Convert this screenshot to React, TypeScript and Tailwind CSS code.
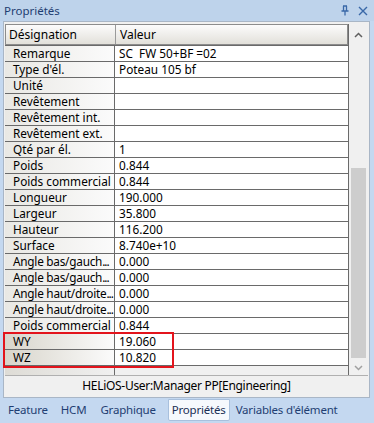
import React from "react";

const rows: [string, string][] = [
  ["Remarque", "SC  FW 50+BF =02"],
  ["Type d'él.", "Poteau 105 bf"],
  ["Unité", ""],
  ["Revêtement", ""],
  ["Revêtement int.", ""],
  ["Revêtement ext.", ""],
  ["Qté par él.", "1"],
  ["Poids", "0.844"],
  ["Poids commercial", "0.844"],
  ["Longueur", "190.000"],
  ["Largeur", "35.800"],
  ["Hauteur", "116.200"],
  ["Surface", "8.740e+10"],
  ["Angle bas/gauch...", "0.000"],
  ["Angle bas/gauch...", "0.000"],
  ["Angle haut/droite...", "0.000"],
  ["Angle haut/droite...", "0.000"],
  ["Poids commercial", "0.844"],
  ["WY", "19.060"],
  ["WZ", "10.820"],
];

const font = { fontFamily: '"Noto Sans", "Open Sans", sans-serif' };

function Label({ text }: { text: string }) {
  if (text.endsWith("...")) {
    const base = text.slice(0, -3);
    return (
      <span className="tracking-[-0.25px]">
        {base}
        <span className="tracking-[-1px]">...</span>
      </span>
    );
  }
  return <span>{text}</span>;
}

export default function App() {
  return (
    <div
      className="relative w-[374px] h-[423px] bg-[#c4d8f0] text-[11.8px] text-black overflow-hidden"
      style={font}
    >
      {/* Title bar */}
      <div className="h-[21px] flex items-center justify-between pl-[4px] pr-[6px] bg-[#bed3eb]">
        <span className="text-[#1f3e72] text-[11.5px]">Propriétés</span>
        <div className="flex items-center gap-[6px]">
          <svg width="10" height="11" viewBox="0 0 10 11" className="mr-[2px]">
            <path d="M3 1h4M3.5 1v5M6.5 1v5M1.5 6h7M5 6v4.5" stroke="#3a68a8" strokeWidth="1.3" fill="none" />
          </svg>
          <svg width="10" height="10" viewBox="0 0 10 10">
            <path d="M1 1L9 9M9 1L1 9" stroke="#3a68a8" strokeWidth="1.4" />
          </svg>
        </div>
      </div>

      {/* Frame */}
      <div className="ml-[3px] w-[367px] h-[377px] border border-[#a9b6c6] bg-[#f0f0f0] flex flex-col">
        <div className="flex flex-1 pt-[2px] pl-[1px]">
          {/* Grid */}
          <div className="w-[344px] flex flex-col border-r border-[#6a6a6a] bg-white">
            {/* Header */}
            <div className="h-[21px] flex border border-[#8c8c8c] bg-gradient-to-b from-[#fcfcfc] to-[#e2e0da] text-[12px]">
              <div className="w-[110px] border-r border-[#9a9a9a] pl-[3px] flex items-center">
                Désignation
              </div>
              <div className="flex-1 pl-[4px] flex items-center">Valeur</div>
            </div>
            {/* Rows */}
            <div className="flex flex-col bg-[#f0f0f0] flex-1">
              {rows.map(([k, v], i) => {
                const sel = i >= 18;
                return (
                  <div key={i} className="h-[16px] flex border-t border-[#6a6a6a] bg-white">
                    <div
                      className={
                        "w-[110px] shrink-0 border-r border-[#6a6a6a] pl-[8px] flex items-center whitespace-nowrap overflow-hidden " +
                        (sel
                          ? "bg-gradient-to-r from-[#d8d5cb] to-[#fbfbfb]"
                          : "bg-gradient-to-r from-[#e9e8e4] to-[#fbfbfb]")
                      }
                    >
                      <Label text={k} />
                    </div>
                    <div className="flex-1 pl-[4px] flex items-center whitespace-pre">{v}</div>
                  </div>
                );
              })}
              <div className="flex flex-1 border-t border-[#6a6a6a]">
                <div className="w-[110px] border-r border-[#6a6a6a] bg-gradient-to-r from-[#dedcd6] to-[#f0f0f0]" />
                <div className="flex-1" />
              </div>
            </div>
          </div>
          {/* Scrollbar */}
          <div className="w-[17px] ml-[1px] flex flex-col bg-[#f0f0f0]">
            <div className="h-[17px] flex items-center justify-center mt-[2px]">
              <svg width="9" height="6" viewBox="0 0 9 6">
                <path d="M1 5L4.5 1.5L8 5" stroke="#606060" strokeWidth="1.5" fill="none" />
              </svg>
            </div>
            <div className="flex-1 flex flex-col">
              <div className="h-[125px]" />
              <div className="flex-1 bg-[#cdcdcd] mx-[1px] mb-[2px]" />
            </div>
            <div className="h-[15px] flex items-center justify-center">
              <svg width="9" height="6" viewBox="0 0 9 6">
                <path d="M1 1L4.5 4.5L8 1" stroke="#a0a0a0" strokeWidth="1.5" fill="none" />
              </svg>
            </div>
          </div>
        </div>
        {/* Status bar */}
        <div className="h-[20px] mx-[1px] mb-[2px] border-t border-[#b0b0b0] bg-[#f0f0f0] flex items-center justify-center text-[12px] tracking-[-0.3px]">
          HELiOS-User:Manager PP[Engineering]
        </div>
      </div>

      {/* Tabs */}
      <div className="flex items-center h-[24px] text-[11.5px] tracking-[-0.2px] text-[#1f3e72] pl-[8px]">
        <div>Feature</div>
        <div className="ml-[13px]">HCM</div>
        <div className="ml-[14px]">Graphique</div>
        <div className="ml-[12px] px-[3px] h-[22px] flex items-center bg-[#f6f9fd] border border-[#a8c0dd] rounded-b-[2px] text-[#1a2f55]">
          Propriétés
        </div>
        <div className="ml-[6px]">Variables d'élément</div>
      </div>

      {/* Red highlight box */}
      <div className="absolute left-[3px] top-[332px] w-[171px] h-[36px] border-2 border-[#e3141c] pointer-events-none" />
    </div>
  );
}
